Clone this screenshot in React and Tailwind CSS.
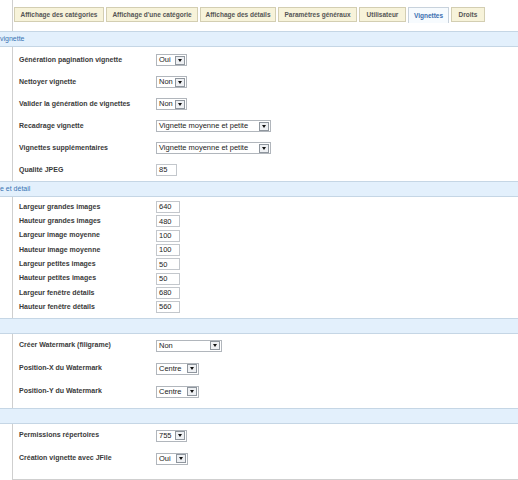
import React from "react";

const tabs = [
  { label: "Affichage des catégories", w: "w-[90px]" },
  { label: "Affichage d'une catégorie", w: "w-[92px]" },
  { label: "Affichage des détails", w: "w-[76px]" },
  { label: "Paramètres généraux", w: "w-[79px]" },
  { label: "Utilisateur", w: "w-[47px]" },
  { label: "Vignettes", w: "w-[41px]", active: true },
  { label: "Droits", w: "w-[34px]" },
];

function Arrow() {
  return (
    <span className="flex h-[9px] w-[10px] items-center justify-center border border-[#8f969e] bg-[#eef0f3]">
      <span className="h-0 w-0 border-x-[2.5px] border-t-[3px] border-x-transparent border-t-[#111]" />
    </span>
  );
}

function Select({ value, w }) {
  return (
    <div
      className={`flex h-[12px] items-center justify-between border border-[#b1b6bc] bg-white pl-[2px] pr-[1px] text-[7.5px] leading-none text-[#222] ${w}`}
    >
      <span>{value}</span>
      <Arrow />
    </div>
  );
}

function Input({ value, w = "w-[24px]" }) {
  return (
    <div
      className={`flex h-[12px] items-center border border-[#c3c7cc] bg-white pl-[2px] text-[7.5px] leading-none text-[#222] ${w}`}
    >
      {value}
    </div>
  );
}

function Band({ title }) {
  return (
    <div className="flex h-[16px] items-center border-y border-[#c5d6e5] bg-[#e3f0fc] text-[7px] text-[#3a74b3]">
      {title}
    </div>
  );
}

function Row({ label, h, children }) {
  return (
    <div className={`flex items-center ${h}`}>
      <div className="w-[143px] pl-[6px] text-[7px] font-bold text-[#3a3a3a]">{label}</div>
      {children}
    </div>
  );
}

export default function App() {
  const sizes = [
    ["Largeur grandes images", "640"],
    ["Hauteur grandes images", "480"],
    ["Largeur image moyenne", "100"],
    ["Hauteur image moyenne", "100"],
    ["Largeur petites images", "50"],
    ["Hauteur petites images", "50"],
    ["Largeur fenêtre détails", "680"],
    ["Hauteur fenêtre détails", "560"],
  ];

  return (
    <div className="h-[480px] w-[518px] overflow-hidden bg-white font-['Liberation_Sans',Arial,sans-serif]">
      {/* tabs */}
      <div className="ml-[12px] h-[31px] border-l border-[#cfcfcf] pl-[1px] pt-[7px]">
        <div className="flex items-start gap-[2px]">
          {tabs.map((t) => (
            <div
              key={t.label}
              className={
                t.active
                  ? `flex h-[16px] items-center justify-center border border-b-0 border-[#c8d2dc] bg-[#f7fbfe] text-[6.5px] font-bold text-[#3a6fb0] ${t.w}`
                  : `flex h-[15px] items-center justify-center border border-[#d3ceb2] bg-[#f7f3da] text-[6.5px] font-bold text-[#555] ${t.w}`
              }
            >
              {t.label}
            </div>
          ))}
        </div>
      </div>

      <Band title="vignette" />
      <div className="ml-[12px] h-[134px] border-l border-[#cfcfcf] pt-[2px]">
        <Row label="Génération pagination vignette" h="h-[22px]">
          <Select value="Oui" w="w-[31px]" />
        </Row>
        <Row label="Nettoyer vignette" h="h-[22px]">
          <Select value="Non" w="w-[31px]" />
        </Row>
        <Row label="Valider la génération de vignettes" h="h-[22px]">
          <Select value="Non" w="w-[31px]" />
        </Row>
        <Row label="Recadrage vignette" h="h-[22px]">
          <Select value="Vignette moyenne et petite" w="w-[115px]" />
        </Row>
        <Row label="Vignettes supplémentaires" h="h-[22px]">
          <Select value="Vignette moyenne et petite" w="w-[115px]" />
        </Row>
        <Row label="Qualité JPEG" h="h-[22px]">
          <Input value="85" w="w-[21px]" />
        </Row>
      </div>

      <Band title="e et détail" />
      <div className="ml-[12px] h-[121px] border-l border-[#cfcfcf] pt-[3px]">
        {sizes.map(([l, v]) => (
          <Row key={l} label={l} h="h-[14.3px]">
            <Input value={v} />
          </Row>
        ))}
      </div>

      <Band title="" />
      <div className="ml-[12px] h-[74px] border-l border-[#cfcfcf]">
        <Row label="Créer Watermark (filigrame)" h="h-[23px]">
          <Select value="Non" w="w-[66px]" />
        </Row>
        <Row label="Position-X du Watermark" h="h-[23px]">
          <Select value="Centre" w="w-[43px]" />
        </Row>
        <Row label="Position-Y du Watermark" h="h-[23px]">
          <Select value="Centre" w="w-[43px]" />
        </Row>
      </div>

      <Band title="" />
      <div className="ml-[12px] h-[56px] border-b border-l border-[#cfcfcf]">
        <Row label="Permissions répertoires" h="h-[23px]">
          <Select value="755" w="w-[31px]" />
        </Row>
        <Row label="Création vignette avec JFile" h="h-[23px]">
          <Select value="Oui" w="w-[32px]" />
        </Row>
      </div>
    </div>
  );
}
